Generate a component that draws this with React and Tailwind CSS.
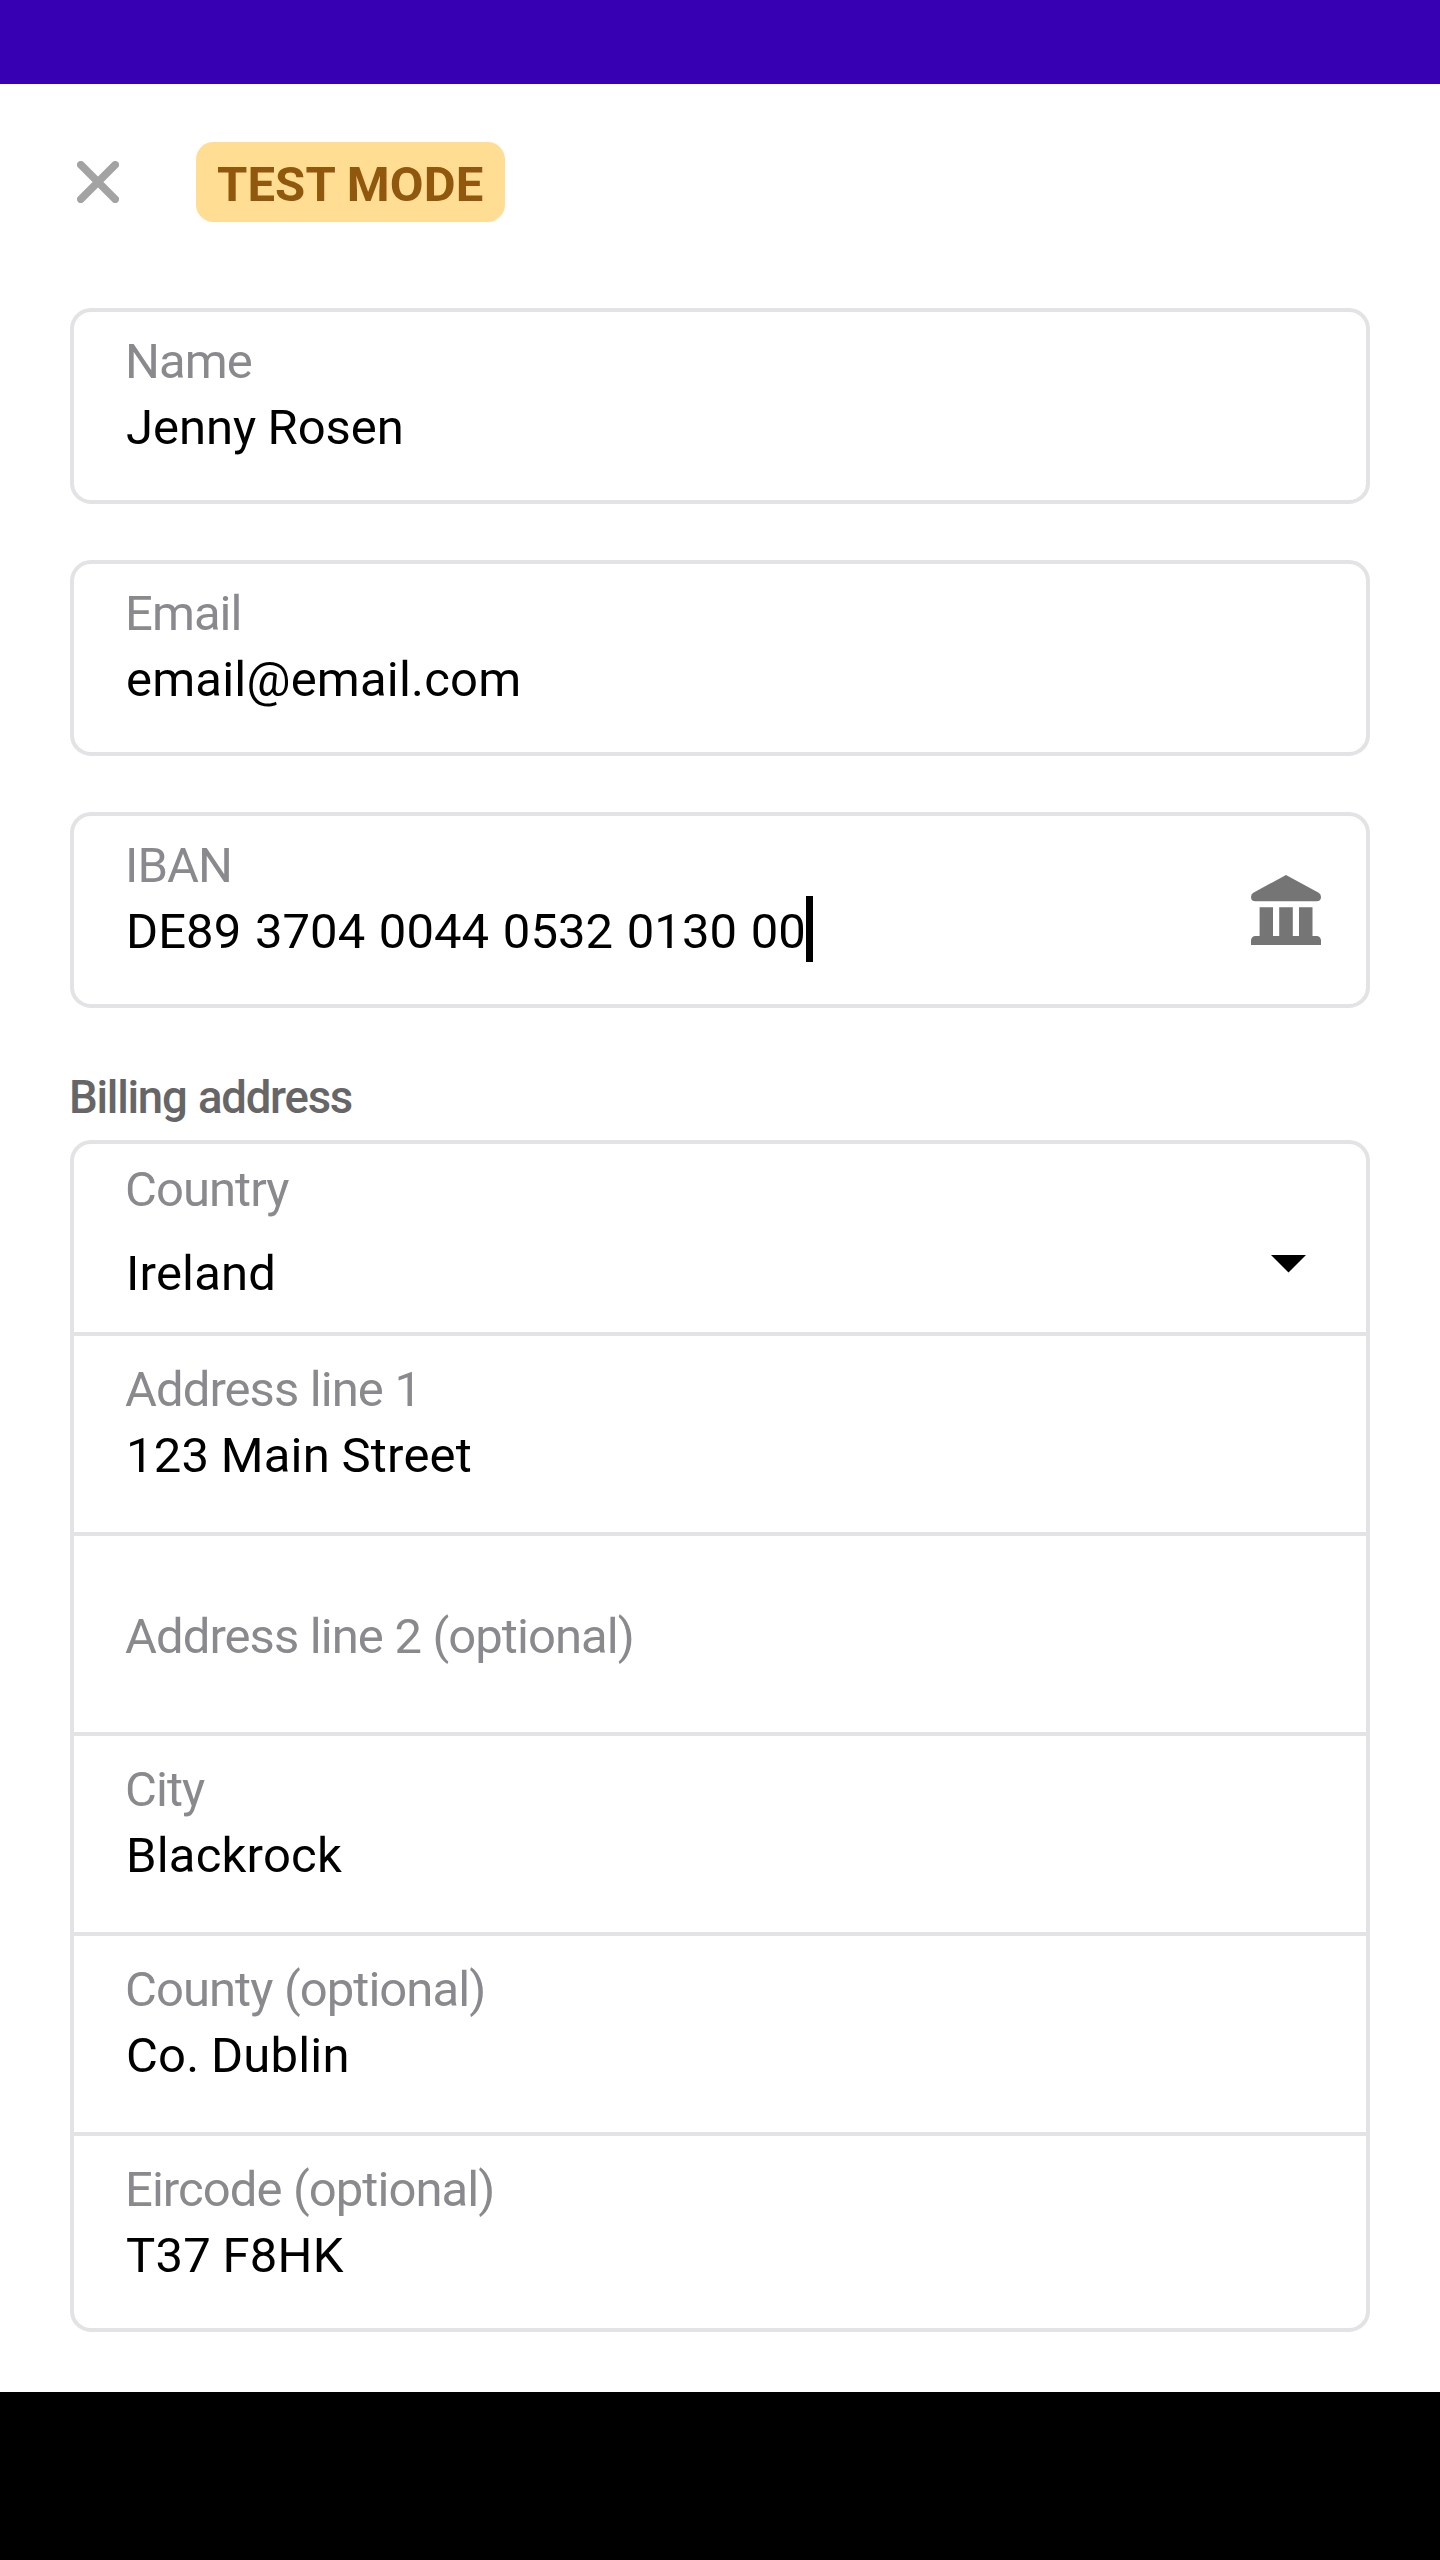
import React from "react";
import clsx from "clsx";

const LABEL = "h-[66px] -ml-px text-[49px] leading-[66px] tracking-[-0.95px] [word-spacing:0.3px] text-[#8A8A8E] whitespace-nowrap";
const VALUE = "h-[66px] text-[49px] leading-[66px] text-black whitespace-nowrap";
const VALUE_SPACING = "tracking-[0.2px] [word-spacing:-0.8px]";

function CloseIcon() {
  return (
    <svg className="size-[42px]" viewBox="0 0 42 42" fill="none" stroke="#A3A3A3" strokeWidth="7.6" strokeLinecap="round">
      <path d="M3.8 3.8 38.2 38.2M38.2 3.8 3.8 38.2" />
    </svg>
  );
}

function BankIcon() {
  return (
    <svg className="size-[70px]" viewBox="0 0 70 70" fill="#757575">
      <path d="M35 0 67.7 17.8Q70 19.2 70 22A4.4 4.4 0 0 1 65.6 26.3H4.4A4.4 4.4 0 0 1 0 22Q0 19.2 2.3 17.8Z" />
      <path d="M8.6 32.3H22V61H28.2V32.3H41.8V61H48V32.3H61.5V61H65.6A4.4 4.4 0 0 1 70 65.4V70H0V65.4A4.4 4.4 0 0 1 4.4 61H8.6Z" />
    </svg>
  );
}

function CaretIcon() {
  return (
    <svg className="h-[17.5px] w-[35px]" viewBox="0 0 35 17.5">
      <path d="M0 0H35L17.5 17.5Z" />
    </svg>
  );
}

function Field({ label, value, spacing = VALUE_SPACING, focused, icon }) {
  return (
    <div className="flex h-[196px] items-start justify-between rounded-[21px] border-4 border-[#E3E3E5] pt-[17px] pr-[45px] pl-[52px]">
      <div>
        <div className={LABEL}>{label}</div>
        <div className="flex">
          <div className={clsx(VALUE, spacing)}>{value}</div>
          {focused && <div className="-mt-[3px] h-[66px] w-[7px] bg-black" />}
        </div>
      </div>
      {icon && <div className="mt-[42px]">{icon}</div>}
    </div>
  );
}

function Row({ label, value }) {
  return (
    <div className="h-[200px] border-b-4 border-[#E3E3E5] pt-[21px] pl-[52px] last:h-[192px] last:border-b-0">
      <div className={LABEL}>{label}</div>
      <div className={clsx(VALUE, VALUE_SPACING)}>{value}</div>
    </div>
  );
}

export default function App() {
  return (
    <div className="flex h-[2560px] w-[1440px] flex-col bg-white font-['Roboto',sans-serif]">
      <div className="h-[84px] bg-[#3700B3]" />

      <header className="flex h-[196px] items-center pl-[77px]">
        <CloseIcon />
        <div className="ml-[77px] flex h-20 w-[309px] items-center rounded-[17.5px] bg-[#FFDD93] pt-[4px] pl-[21px] text-[49px] leading-[57px] font-bold tracking-[0.1px] whitespace-nowrap text-[#90570F]">
          TEST MODE
        </div>
      </header>

      <main className="flex flex-col px-[70px] pt-7">
        <div className="flex flex-col gap-14">
          <Field label="Name" value="Jenny Rosen" spacing="tracking-[-0.05px] [word-spacing:-0.6px]" />
          <Field label="Email" value="email@email.com" />
          <Field
            label="IBAN"
            value="DE89 3704 0044 0532 0130 00"
            spacing="tracking-[0.05px] [word-spacing:1.4px]"
            focused
            icon={<BankIcon />}
          />
        </div>

        <h2 className="mt-[60px] -ml-px h-[60px] text-[45.5px] leading-[60px] font-medium tracking-[-1.25px] [word-spacing:1.5px] text-[#666666]">
          Billing address
        </h2>

        <section className="mt-3 rounded-[21px] border-4 border-[#E3E3E5]">
          <div className="flex h-[192px] items-start justify-between border-b-4 border-[#E3E3E5] pt-[13px] pr-[60px] pl-[52px]">
            <div className="flex flex-col gap-[18px]">
              <div className={LABEL}>Country</div>
              <div className={clsx(VALUE, VALUE_SPACING)}>Ireland</div>
            </div>
            <div className="mt-[98px]">
              <CaretIcon />
            </div>
          </div>
          <Row label="Address line 1" value="123 Main Street" />
          <div className="flex h-[200px] items-center border-b-4 border-[#E3E3E5] pt-[6px] pl-[52px]">
            <div className={LABEL}>Address line 2 (optional)</div>
          </div>
          <Row label="City" value="Blackrock" />
          <Row label="County (optional)" value="Co. Dublin" />
          <Row label="Eircode (optional)" value="T37 F8HK" />
        </section>
      </main>

      <div className="mt-auto h-[168px] bg-black" />
    </div>
  );
}
